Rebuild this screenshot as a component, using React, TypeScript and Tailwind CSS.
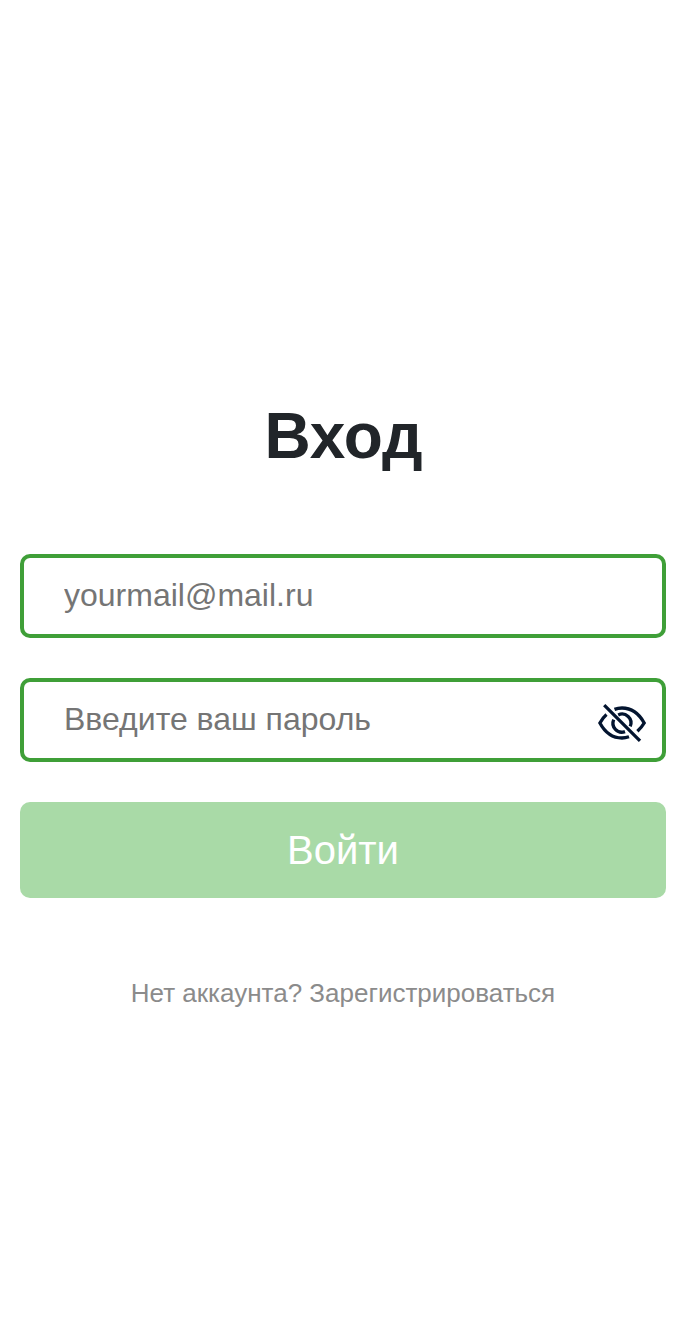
import { useState } from "react";

function HiddenEyeIcon() {
  return (
    <svg
      className="block h-10 w-12"
      viewBox="0 0 48 40"
      fill="none"
      stroke="#03142f"
      strokeWidth="3.3"
      aria-hidden="true"
    >
      <path d="M6.200 2.200 42 37.800" />
      <path d="M16.500 6.400C18.800 5.500 21.400 5 24 5c9.500 0 17.400 6.300 22.200 15-2 3.500-4.200 5.800-6.800 8.200" />
      <path d="M8.500 11.500C5.800 13.800 3.800 16.700 1.900 20 6.600 28.700 14.500 35 24 35c2.400 0 4.800-.5 7-1.200" />
      <path d="M20.200 11.900A8.900 8.900 0 0 1 32.200 23.400" />
      <path d="M15.700 16.700A8.900 8.900 0 0 0 27 28.600" />
    </svg>
  );
}

const fieldClass =
  "block h-[84px] w-full rounded-[10px] border-4 border-[#3f9f38] bg-white pt-0 pb-[2px] pl-10 text-[32px] leading-normal text-[#212529] outline-none placeholder:text-[#757575]";

export default function App() {
  const [visible, setVisible] = useState(false);

  return (
    <main className="flex h-[1334px] flex-col items-center bg-white px-5 pt-[398px] font-['Liberation_Sans',Arial,sans-serif]">
      <h1 className="pl-px text-[64px] leading-[77px] font-bold text-[#212529]">Вход</h1>
      <form className="mt-[79px] flex w-full flex-col gap-10" onSubmit={(e) => e.preventDefault()}>
        <input className={fieldClass} type="email" placeholder="yourmail@mail.ru" />
        <div className="relative">
          <input
            className={fieldClass}
            type={visible ? "text" : "password"}
            placeholder="Введите ваш пароль"
          />
          <button
            type="button"
            className="absolute top-[25px] right-5"
            aria-label="Показать пароль"
            onClick={() => setVisible(!visible)}
          >
            <HiddenEyeIcon />
          </button>
        </div>
        <button
          type="submit"
          className="h-24 w-full rounded-[10px] bg-[#a9daa7] text-[40px] leading-[60px] text-white"
        >
          Войти
        </button>
      </form>
      <a className="mt-[76px] text-[26px] leading-[39px] text-[#8b8b8b]" href="#register">
        Нет аккаунта? Зарегистрироваться
      </a>
    </main>
  );
}
